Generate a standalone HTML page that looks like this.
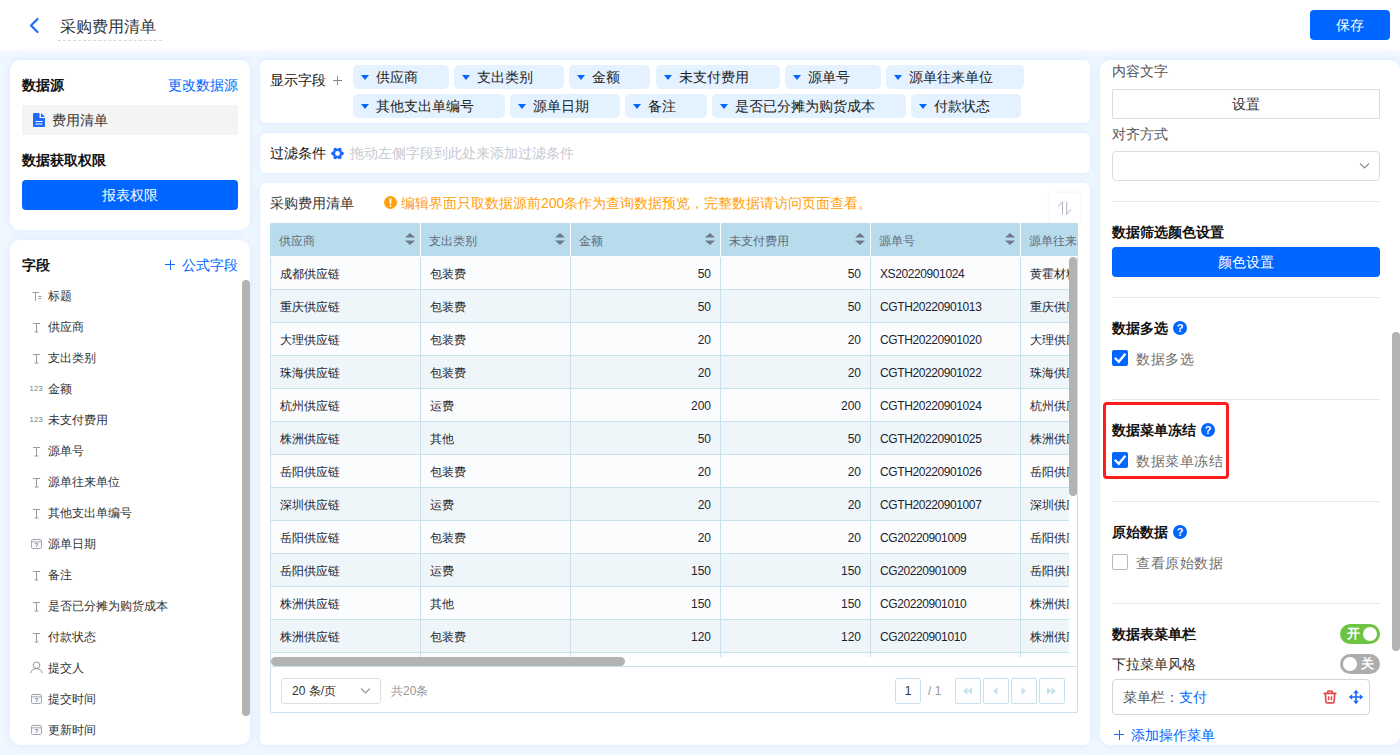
<!DOCTYPE html>
<html><head><meta charset="utf-8"><style>
*{box-sizing:border-box;margin:0;padding:0}
html,body{width:1400px;height:755px;overflow:hidden}
body{position:relative;background:#f0f7ff;font-family:"Liberation Sans",sans-serif;color:#333;font-size:14px}
.abs{position:absolute}
.t{position:absolute;white-space:nowrap;line-height:16px}
.hdr{position:absolute;left:0;top:0;width:1400px;height:50px;background:#fff}
.panel{position:absolute;background:#fff;border-radius:10px;box-shadow:0 0 9px rgba(70,160,255,0.12)}
.btn{position:absolute;background:#0066ff;color:#fff;border-radius:4px;text-align:center}
.b{font-weight:bold;color:#111}
.blue{color:#0066ff}
.field{position:absolute;left:22px;height:20px;font-size:12px;color:#333}
.field .ic{position:absolute;left:10px;top:5px;width:12px;height:12px}
.field .lb{position:absolute;left:26px;top:3px;line-height:14px;white-space:nowrap}
.num{font-family:'Liberation Sans',sans-serif;font-size:7.5px;color:#7a7a7a;letter-spacing:0.3px;position:absolute;left:-2.5px;top:1px;line-height:8px}
.chip{position:absolute;height:24px;background:#e4f1fe;border-radius:5px;font-size:14px;color:#222}
.chip .tri{position:absolute;left:8px;top:10px;width:0;height:0;border-left:4.5px solid transparent;border-right:4.5px solid transparent;border-top:5px solid #0066ff}
.chip .tx{position:absolute;left:23px;top:4px;line-height:16px;white-space:nowrap}
table.grid{position:absolute;left:0;top:0;border-collapse:collapse;table-layout:fixed;font-size:12px;color:#1c2430}
.grid td,.grid th{width:150px;height:33px;border:1px solid #c8e1ed;padding:3px 9px 0 9px;white-space:nowrap;overflow:hidden;font-weight:normal;text-align:left}
.grid th{height:33px;background:#b9dcec;color:#5b6b7c;border-color:#fff;border-top:none;position:relative;padding-top:4px;padding-left:8px}
.grid tr:nth-child(even) td{background:#fbfcfe}
.grid tr:nth-child(odd) td{background:#eff6fa}
.grid th:first-child{border-left-color:#b9dcec}
.grid td.r{text-align:right}
.grid td.id{letter-spacing:-0.4px}
.sorti{position:absolute;right:5px;top:10px;width:10px;height:12px}
.sec{position:absolute;left:1112px;width:268px;height:1px;background:#e6e6e6}
.cb{position:absolute;left:1112px;width:16px;height:16px;background:#0066ff;border-radius:2px}
.q{position:absolute;width:14px;height:14px;border-radius:50%;background:#0066ff;color:#fff;font-size:11px;font-weight:bold;text-align:center;line-height:14px}
.pbtn{position:absolute;top:678px;width:26px;height:26px;border:1px solid #c8e1ed;border-radius:2px;background:#fff}
</style></head><body>

<div class="hdr"></div><div class="abs" style="left:0;top:50px;width:1400px;height:10px;background:linear-gradient(#f7faff,#ebf5ff)"></div>
<svg class="abs" style="left:28px;top:17px" width="12" height="17" viewBox="0 0 12 17"><path d="M9.5 2L3 8.5L9.5 15" stroke="#1f6bff" stroke-width="2.2" fill="none" stroke-linecap="round" stroke-linejoin="round"/></svg>
<div class="t" style="left:60px;top:18px;font-size:16px;line-height:18px;color:#333">采购费用清单</div>
<div class="abs" style="left:58px;top:40px;width:104px;height:0;border-top:1px dashed #d8d8d8"></div>
<div class="btn" style="left:1310px;top:10px;width:80px;height:30px;line-height:30px;font-size:14px">保存</div>
<div class="panel" style="left:10px;top:60px;width:240px;height:170px"></div>
<div class="t b" style="left:22px;top:77px">数据源</div>
<div class="t blue" style="left:168px;top:77px">更改数据源</div>
<div class="abs" style="left:22px;top:105px;width:216px;height:30px;background:#f4f4f4;border-radius:2px"></div>
<svg class="abs" style="left:33px;top:113px" width="12" height="14" viewBox="0 0 12 14"><path d="M0 1Q0 0 1 0H6.5V5H12V13Q12 14 11 14H1Q0 14 0 13Z" fill="#1a6aff"/><path d="M8 0L12 4H8Z" fill="#1a6aff"/><path d="M2.5 8.5H9.5M2.5 11H9.5" stroke="#fff" stroke-width="1.2"/></svg>
<div class="t" style="left:52px;top:112px;color:#333">费用清单</div>
<div class="t b" style="left:22px;top:152px">数据获取权限</div>
<div class="btn" style="left:22px;top:180px;width:216px;height:30px;line-height:30px">报表权限</div>
<div class="panel" style="left:10px;top:240px;width:240px;height:505px"></div>
<div class="t b" style="left:22px;top:257px">字段</div>
<div class="abs" style="left:165px;top:264px;width:10px;height:1px;background:#1a6aff"></div><div class="abs" style="left:169.5px;top:259.5px;width:1px;height:10px;background:#1a6aff"></div>
<div class="t blue" style="left:182px;top:257px">公式字段</div>
<div class="field" style="top:286px"><span class="ic"><svg width="10" height="11" viewBox="0 0 10 11"><path d="M0.5 1.5H7M3.5 1.5V10M6.5 5.5H9.5M6.5 7.5H9.5" stroke="#9a9a9a" stroke-width="1" fill="none"/></svg></span><span class="lb">标题</span></div>
<div class="field" style="top:317px"><span class="ic"><svg width="9" height="11" viewBox="0 0 9 11"><path d="M1 1.5H8M4.5 1.5V10M2.5 10H6.5" stroke="#9a9a9a" stroke-width="1" fill="none"/></svg></span><span class="lb">供应商</span></div>
<div class="field" style="top:348px"><span class="ic"><svg width="9" height="11" viewBox="0 0 9 11"><path d="M1 1.5H8M4.5 1.5V10M2.5 10H6.5" stroke="#9a9a9a" stroke-width="1" fill="none"/></svg></span><span class="lb">支出类别</span></div>
<div class="field" style="top:379px"><span class="ic"><span class="num">123</span></span><span class="lb">金额</span></div>
<div class="field" style="top:410px"><span class="ic"><span class="num">123</span></span><span class="lb">未支付费用</span></div>
<div class="field" style="top:441px"><span class="ic"><svg width="9" height="11" viewBox="0 0 9 11"><path d="M1 1.5H8M4.5 1.5V10M2.5 10H6.5" stroke="#9a9a9a" stroke-width="1" fill="none"/></svg></span><span class="lb">源单号</span></div>
<div class="field" style="top:472px"><span class="ic"><svg width="9" height="11" viewBox="0 0 9 11"><path d="M1 1.5H8M4.5 1.5V10M2.5 10H6.5" stroke="#9a9a9a" stroke-width="1" fill="none"/></svg></span><span class="lb">源单往来单位</span></div>
<div class="field" style="top:503px"><span class="ic"><svg width="9" height="11" viewBox="0 0 9 11"><path d="M1 1.5H8M4.5 1.5V10M2.5 10H6.5" stroke="#9a9a9a" stroke-width="1" fill="none"/></svg></span><span class="lb">其他支出单编号</span></div>
<div class="field" style="top:534px"><span class="ic"><svg width="11" height="11" viewBox="0 0 11 11" style="position:absolute;left:-1.5px;top:-1px"><rect x="0.5" y="1.5" width="10" height="9" rx="1.2" stroke="#a3a7ae" fill="#f7f8fb"/><path d="M0.5 3.8H10.5M3 0.6V2M8 0.6V2" stroke="#a3a7ae" fill="none" stroke-width="0.9"/><path d="M4 5.6H6.8L5.3 8.8" stroke="#7f8ba0" fill="none" stroke-width="0.9"/></svg></span><span class="lb">源单日期</span></div>
<div class="field" style="top:565px"><span class="ic"><svg width="9" height="11" viewBox="0 0 9 11"><path d="M1 1.5H8M4.5 1.5V10M2.5 10H6.5" stroke="#9a9a9a" stroke-width="1" fill="none"/></svg></span><span class="lb">备注</span></div>
<div class="field" style="top:596px"><span class="ic"><svg width="9" height="11" viewBox="0 0 9 11"><path d="M1 1.5H8M4.5 1.5V10M2.5 10H6.5" stroke="#9a9a9a" stroke-width="1" fill="none"/></svg></span><span class="lb">是否已分摊为购货成本</span></div>
<div class="field" style="top:627px"><span class="ic"><svg width="9" height="11" viewBox="0 0 9 11"><path d="M1 1.5H8M4.5 1.5V10M2.5 10H6.5" stroke="#9a9a9a" stroke-width="1" fill="none"/></svg></span><span class="lb">付款状态</span></div>
<div class="field" style="top:658px"><span class="ic"><svg width="13" height="13" viewBox="0 0 13 13" style="position:absolute;left:-2px;top:-2px"><circle cx="6.5" cy="4.2" r="3.3" stroke="#8a8a8a" stroke-width="0.9" fill="none"/><path d="M0.8 12.2C1.3 9.2 3.5 7.6 6.5 7.6S11.7 9.2 12.2 12.2" stroke="#8a8a8a" stroke-width="0.9" fill="none"/></svg></span><span class="lb">提交人</span></div>
<div class="field" style="top:689px"><span class="ic"><svg width="11" height="11" viewBox="0 0 11 11" style="position:absolute;left:-1.5px;top:-1px"><rect x="0.5" y="1.5" width="10" height="9" rx="1.2" stroke="#a3a7ae" fill="#f7f8fb"/><path d="M0.5 3.8H10.5M3 0.6V2M8 0.6V2" stroke="#a3a7ae" fill="none" stroke-width="0.9"/><path d="M4 5.6H6.8L5.3 8.8" stroke="#7f8ba0" fill="none" stroke-width="0.9"/></svg></span><span class="lb">提交时间</span></div>
<div class="field" style="top:720px"><span class="ic"><svg width="11" height="11" viewBox="0 0 11 11" style="position:absolute;left:-1.5px;top:-1px"><rect x="0.5" y="1.5" width="10" height="9" rx="1.2" stroke="#a3a7ae" fill="#f7f8fb"/><path d="M0.5 3.8H10.5M3 0.6V2M8 0.6V2" stroke="#a3a7ae" fill="none" stroke-width="0.9"/><path d="M4 5.6H6.8L5.3 8.8" stroke="#7f8ba0" fill="none" stroke-width="0.9"/></svg></span><span class="lb">更新时间</span></div>
<div class="abs" style="left:242px;top:280px;width:8px;height:436px;background:#b3b3b3;border-radius:4px"></div>
<div class="panel" style="left:260px;top:60px;width:830px;height:63px;border-radius:6px"></div>
<div class="t" style="left:270px;top:72px;color:#111">显示字段</div>
<div class="abs" style="left:333px;top:80px;width:9px;height:1px;background:#888"></div><div class="abs" style="left:337px;top:76px;width:1px;height:9px;background:#888"></div>
<div class="chip" style="left:353px;top:65px;width:96px"><span class="tri"></span><span class="tx">供应商</span></div>
<div class="chip" style="left:454px;top:65px;width:110px"><span class="tri"></span><span class="tx">支出类别</span></div>
<div class="chip" style="left:569px;top:65px;width:81px"><span class="tri"></span><span class="tx">金额</span></div>
<div class="chip" style="left:656px;top:65px;width:124px"><span class="tri"></span><span class="tx">未支付费用</span></div>
<div class="chip" style="left:785px;top:65px;width:96px"><span class="tri"></span><span class="tx">源单号</span></div>
<div class="chip" style="left:886px;top:65px;width:138px"><span class="tri"></span><span class="tx">源单往来单位</span></div>
<div class="chip" style="left:353px;top:94px;width:152px"><span class="tri"></span><span class="tx">其他支出单编号</span></div>
<div class="chip" style="left:510px;top:94px;width:110px"><span class="tri"></span><span class="tx">源单日期</span></div>
<div class="chip" style="left:625px;top:94px;width:82px"><span class="tri"></span><span class="tx">备注</span></div>
<div class="chip" style="left:712px;top:94px;width:194px"><span class="tri"></span><span class="tx">是否已分摊为购货成本</span></div>
<div class="chip" style="left:911px;top:94px;width:110px"><span class="tri"></span><span class="tx">付款状态</span></div>
<div class="panel" style="left:260px;top:133px;width:830px;height:40px;border-radius:6px"></div>
<div class="t" style="left:270px;top:145px;color:#111">过滤条件</div>
<svg class="abs" style="left:331px;top:147px" width="13" height="13" viewBox="0 0 13 13"><circle cx="6.5" cy="6.5" r="4.7" fill="#1a6aff"/><circle cx="10.90" cy="6.50" r="1.9" fill="#1a6aff"/><circle cx="8.70" cy="10.31" r="1.9" fill="#1a6aff"/><circle cx="4.30" cy="10.31" r="1.9" fill="#1a6aff"/><circle cx="2.10" cy="6.50" r="1.9" fill="#1a6aff"/><circle cx="4.30" cy="2.69" r="1.9" fill="#1a6aff"/><circle cx="8.70" cy="2.69" r="1.9" fill="#1a6aff"/><circle cx="6.5" cy="6.5" r="2.4" fill="#fff"/></svg>
<div class="t" style="left:350px;top:145px;color:#c4c9d2">拖动左侧字段到此处来添加过滤条件</div>
<div class="panel" style="left:260px;top:183px;width:830px;height:562px;border-radius:6px"></div>
<div class="t" style="left:270px;top:195px">采购费用清单</div>
<svg class="abs" style="left:384px;top:196px" width="13" height="13" viewBox="0 0 13 13"><circle cx="6.5" cy="6.5" r="6.5" fill="#ffa10f"/><path d="M5.3 2.5H7.7L7.1 8H5.9Z" fill="#fff"/><circle cx="6.5" cy="9.8" r="0.95" fill="#fff"/></svg>
<div class="t" style="left:401px;top:195px;color:#ff9f0a">编辑界面只取数据源前200条作为查询数据预览，完整数据请访问页面查看。</div>
<div class="abs" style="left:1050px;top:193px;width:30px;height:30px;background:#fff;box-shadow:0 0 4px rgba(60,40,90,0.07)"></div>
<svg class="abs" style="left:1058px;top:201px" width="14" height="14" viewBox="0 0 14 14"><path d="M0.3 5.2L4.5 1V13.3M8.7 1V13.3L13 8.3" stroke="#a9aeb8" stroke-width="0.95" fill="none"/></svg>
<div class="abs" style="left:270px;top:223px;width:808px;height:490px;border:1px solid #c8e1ed;border-top:none;border-radius:2px;background:#fff"></div>
<div class="abs" style="left:270px;top:223px;width:808px;height:434px;overflow:hidden;border-radius:2px 2px 0 0">
<table class="grid" style="left:0;top:0;width:900px"><colgroup><col style="width:150px"><col style="width:150px"><col style="width:150px"><col style="width:150px"><col style="width:150px"><col style="width:150px"></colgroup><tr>
<th>供应商<svg class="sorti" viewBox="0 0 10 12"><path d="M5 0L10 4.6H0Z M5 12L10 7.4H0Z" fill="#6c7a8c"/></svg></th>
<th>支出类别<svg class="sorti" viewBox="0 0 10 12"><path d="M5 0L10 4.6H0Z M5 12L10 7.4H0Z" fill="#6c7a8c"/></svg></th>
<th>金额<svg class="sorti" viewBox="0 0 10 12"><path d="M5 0L10 4.6H0Z M5 12L10 7.4H0Z" fill="#6c7a8c"/></svg></th>
<th>未支付费用<svg class="sorti" viewBox="0 0 10 12"><path d="M5 0L10 4.6H0Z M5 12L10 7.4H0Z" fill="#6c7a8c"/></svg></th>
<th>源单号<svg class="sorti" viewBox="0 0 10 12"><path d="M5 0L10 4.6H0Z M5 12L10 7.4H0Z" fill="#6c7a8c"/></svg></th>
<th>源单往来单位<svg class="sorti" viewBox="0 0 10 12"><path d="M5 0L10 4.6H0Z M5 12L10 7.4H0Z" fill="#6c7a8c"/></svg></th>
</tr>
<tr>
<td>成都供应链</td>
<td>包装费</td>
<td class="r">50</td>
<td class="r">50</td>
<td class="id">XS20220901024</td>
<td>黄霍材料</td>
</tr>
<tr>
<td>重庆供应链</td>
<td>包装费</td>
<td class="r">50</td>
<td class="r">50</td>
<td class="id">CGTH20220901013</td>
<td>重庆供应链</td>
</tr>
<tr>
<td>大理供应链</td>
<td>包装费</td>
<td class="r">20</td>
<td class="r">20</td>
<td class="id">CGTH20220901020</td>
<td>大理供应链</td>
</tr>
<tr>
<td>珠海供应链</td>
<td>包装费</td>
<td class="r">20</td>
<td class="r">20</td>
<td class="id">CGTH20220901022</td>
<td>珠海供应链</td>
</tr>
<tr>
<td>杭州供应链</td>
<td>运费</td>
<td class="r">200</td>
<td class="r">200</td>
<td class="id">CGTH20220901024</td>
<td>杭州供应链</td>
</tr>
<tr>
<td>株洲供应链</td>
<td>其他</td>
<td class="r">50</td>
<td class="r">50</td>
<td class="id">CGTH20220901025</td>
<td>株洲供应链</td>
</tr>
<tr>
<td>岳阳供应链</td>
<td>包装费</td>
<td class="r">20</td>
<td class="r">20</td>
<td class="id">CGTH20220901026</td>
<td>岳阳供应链</td>
</tr>
<tr>
<td>深圳供应链</td>
<td>运费</td>
<td class="r">20</td>
<td class="r">20</td>
<td class="id">CGTH20220901007</td>
<td>深圳供应链</td>
</tr>
<tr>
<td>岳阳供应链</td>
<td>包装费</td>
<td class="r">20</td>
<td class="r">20</td>
<td class="id">CG20220901009</td>
<td>岳阳供应链</td>
</tr>
<tr>
<td>岳阳供应链</td>
<td>运费</td>
<td class="r">150</td>
<td class="r">150</td>
<td class="id">CG20220901009</td>
<td>岳阳供应链</td>
</tr>
<tr>
<td>株洲供应链</td>
<td>其他</td>
<td class="r">150</td>
<td class="r">150</td>
<td class="id">CG20220901010</td>
<td>株洲供应链</td>
</tr>
<tr>
<td>株洲供应链</td>
<td>包装费</td>
<td class="r">120</td>
<td class="r">120</td>
<td class="id">CG20220901010</td>
<td>株洲供应链</td>
</tr>
<tr>
<td>株洲供应链</td>
<td>包装费</td>
<td class="r">120</td>
<td class="r">120</td>
<td class="id">CG20220901010</td>
<td>株洲供应链</td>
</tr>
</table>
<div class="abs" style="left:799px;top:33px;width:9px;height:401px;background:#fff"></div>
<div class="abs" style="left:807px;top:33px;width:1px;height:401px;background:#c8e1ed"></div>
<div class="abs" style="left:799px;top:34px;width:8px;height:239px;background:#b3b3b3;border-radius:4px"></div>
</div>
<div class="abs" style="left:271px;top:657px;width:806px;height:9px;background:#fff"></div>
<div class="abs" style="left:271px;top:657px;width:354px;height:9px;background:#b3b3b3;border-radius:5px"></div>
<div class="abs" style="left:270px;top:666px;width:808px;height:1px;background:#c8e1ed"></div>
<div class="abs" style="left:281px;top:678px;width:100px;height:26px;border:1px solid #dcdfe6;border-radius:3px;background:#fff"></div>
<div class="t" style="left:292px;top:683px;font-size:12px;color:#333">20 条/页</div>
<svg class="abs" style="left:360px;top:687px" width="11" height="8" viewBox="0 0 11 8"><path d="M1 1.5L5.5 6L10 1.5" stroke="#999" stroke-width="1.1" fill="none"/></svg>
<div class="t" style="left:391px;top:683px;font-size:12px;color:#999">共20条</div>
<div class="abs" style="left:895px;top:678px;width:26px;height:26px;border:1px solid #c8e1ed;border-radius:3px;background:#fff;text-align:center;font-size:12px;line-height:24px;color:#333">1</div>
<div class="t" style="left:928px;top:683px;font-size:12px;color:#999">/ 1</div>
<div class="pbtn" style="left:955px"></div>
<svg class="abs" style="left:962px;top:686px" width="11" height="10" viewBox="0 0 11 10"><path d="M5.5 1L1 5L5.5 9Z M10 1L5.5 5L10 9Z" fill="#c8e1ed"/></svg>
<div class="pbtn" style="left:983px"></div>
<svg class="abs" style="left:992px;top:686px" width="7" height="10" viewBox="0 0 7 10"><path d="M5.5 1L1 5L5.5 9Z" fill="#c8e1ed"/></svg>
<div class="pbtn" style="left:1011px"></div>
<svg class="abs" style="left:1020px;top:686px" width="7" height="10" viewBox="0 0 7 10"><path d="M1.5 1L6 5L1.5 9Z" fill="#c8e1ed"/></svg>
<div class="pbtn" style="left:1039px"></div>
<svg class="abs" style="left:1046px;top:686px" width="11" height="10" viewBox="0 0 11 10"><path d="M1 1L5.5 5L1 9Z M5.5 1L10 5L5.5 9Z" fill="#c8e1ed"/></svg>
<div class="panel" style="left:1100px;top:60px;width:300px;height:685px"></div>
<div class="t" style="left:1112px;top:63px;color:#555">内容文字</div>
<div class="abs" style="left:1112px;top:89px;width:268px;height:30px;border:1px solid #dcdcdc;border-radius:2px;text-align:center;line-height:28px;color:#333">设置</div>
<div class="t" style="left:1112px;top:126px;color:#555">对齐方式</div>
<div class="abs" style="left:1112px;top:151px;width:268px;height:30px;border:1px solid #dcdcdc;border-radius:4px"></div>
<svg class="abs" style="left:1359px;top:162px" width="11" height="8" viewBox="0 0 11 8"><path d="M1 1.5L5.5 6L10 1.5" stroke="#8a8a8a" stroke-width="1.1" fill="none"/></svg>
<div class="sec" style="top:201px"></div>
<div class="t b" style="left:1112px;top:224px">数据筛选颜色设置</div>
<div class="btn" style="left:1112px;top:247px;width:268px;height:30px;line-height:30px">颜色设置</div>
<div class="sec" style="top:297px"></div>
<div class="t b" style="left:1112px;top:320px">数据多选</div>
<div class="q" style="left:1173px;top:321px">?</div>
<div class="cb" style="top:350px"><svg width="16" height="16" viewBox="0 0 16 16" style="position:absolute;left:0;top:0"><path d="M2.8 7.8L6.8 11.8L13.4 3.8" stroke="#fff" stroke-width="2.3" fill="none"/></svg></div>
<div class="t" style="left:1136px;top:351px;color:#707070;letter-spacing:0.5px">数据多选</div>
<div class="sec" style="top:399px"></div>
<div class="abs" style="left:1103px;top:402px;width:126px;height:77px;border:3px solid #ff1c1c;border-radius:4px"></div>
<div class="t b" style="left:1112px;top:422px">数据菜单冻结</div>
<div class="q" style="left:1201px;top:423px">?</div>
<div class="cb" style="top:452px"><svg width="16" height="16" viewBox="0 0 16 16" style="position:absolute;left:0;top:0"><path d="M2.8 7.8L6.8 11.8L13.4 3.8" stroke="#fff" stroke-width="2.3" fill="none"/></svg></div>
<div class="t" style="left:1136px;top:453px;color:#707070;letter-spacing:0.5px">数据菜单冻结</div>
<div class="sec" style="top:501px"></div>
<div class="t b" style="left:1112px;top:524px">原始数据</div>
<div class="q" style="left:1173px;top:525px">?</div>
<div class="abs" style="left:1112px;top:554px;width:16px;height:16px;border:1px solid #b8b8c8;border-radius:2px;background:#fff"></div>
<div class="t" style="left:1136px;top:555px;color:#707070;letter-spacing:0.5px">查看原始数据</div>
<div class="sec" style="top:603px"></div>
<div class="t b" style="left:1112px;top:626px">数据表菜单栏</div>
<div class="abs" style="left:1340px;top:624px;width:40px;height:20px;border-radius:10px;background:#6dc442"></div><div class="abs" style="left:1363px;top:627px;width:14px;height:14px;border-radius:50%;background:#fff"></div><div class="t" style="left:1346.5px;top:626px;font-size:13px;font-weight:bold;color:#fff">开</div>
<div class="t" style="left:1112px;top:656px;color:#333">下拉菜单风格</div>
<div class="abs" style="left:1340px;top:654px;width:40px;height:20px;border-radius:10px;background:#adadad"></div><div class="abs" style="left:1343px;top:657px;width:14px;height:14px;border-radius:50%;background:#fff"></div><div class="t" style="left:1361px;top:656px;font-size:13px;font-weight:bold;color:#fff">关</div>
<div class="abs" style="left:1112px;top:679px;width:258px;height:36px;border:1px solid #d4d4d4;border-radius:4px"></div>
<div class="t" style="left:1123px;top:689px;color:#555">菜单栏：</div><div class="t blue" style="left:1179px;top:689px">支付</div>
<svg class="abs" style="left:1323px;top:689.5px" width="14" height="14" viewBox="0 0 14 14"><path d="M0.6 3.4H13.4" stroke="#e5484d" stroke-width="1.8"/><path d="M4.6 3.4V2.2Q4.6 1 5.8 1H8.2Q9.4 1 9.4 2.2V3.4" stroke="#e5484d" stroke-width="1.6" fill="none"/><path d="M2.3 3.4L2.9 11.6Q3 12.9 4.3 12.9H9.7Q11 12.9 11.1 11.6L11.7 3.4" stroke="#e5484d" stroke-width="1.7" fill="none"/><path d="M5.6 6.2V10.2M8.4 6.2V10.2" stroke="#e5484d" stroke-width="1.5"/></svg>
<svg class="abs" style="left:1348.5px;top:690px" width="14" height="14" viewBox="0 0 14 14"><path d="M7 1V13M1 7H13" stroke="#1a6aff" stroke-width="1.6"/><path d="M7 -0.3L9.8 3.2H4.2Z M7 14.3L9.8 10.8H4.2Z M-0.3 7L3.2 4.2V9.8Z M14.3 7L10.8 4.2V9.8Z" fill="#1a6aff"/></svg>
<div class="abs" style="left:1114px;top:734px;width:10px;height:1px;background:#1a6aff"></div><div class="abs" style="left:1118.5px;top:729.5px;width:1px;height:10px;background:#1a6aff"></div>
<div class="t blue" style="left:1131px;top:727px">添加操作菜单</div>
<div class="abs" style="left:1392px;top:332px;width:8px;height:319px;background:#b3b3b3;border-radius:4px"></div>
</body></html>
